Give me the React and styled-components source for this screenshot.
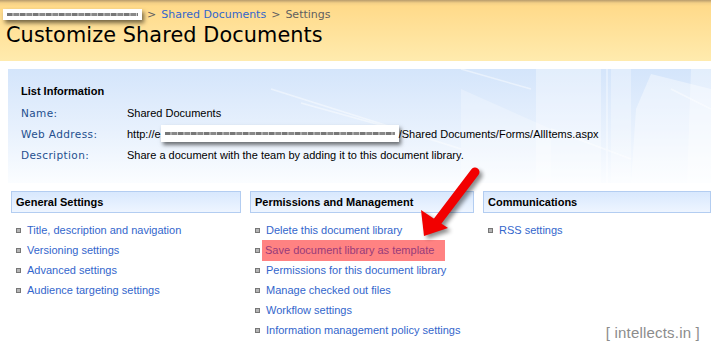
import styled, { createGlobalStyle } from "styled-components";

const GlobalStyle = createGlobalStyle`
  html, body {
    margin: 0;
    padding: 0;
    background: #fff;
  }
  body {
    font-family: "Liberation Sans", Tahoma, sans-serif;
    font-size: 11px;
  }
`;

const Page = styled.div`
  position: relative;
  width: 711px;
  height: 344px;
  overflow: hidden;
`;

const HeaderBand = styled.header`
  height: 61px;
  box-sizing: border-box;
  padding: 8px 0 0 3px;
  background: linear-gradient(
    #b79b6c 0px,
    #f3cf86 3px,
    #ffda8a 6px,
    #ffebae 100%
  );
`;

const Crumbs = styled.div`
  display: flex;
  align-items: center;
  gap: 5px;
  height: 12px;
  font-family: "DejaVu Sans", Verdana, sans-serif;
  font-size: 11px;
  color: #5f5f5f;
`;

const Redacted = styled.span`
  display: inline-flex;
  align-items: center;
  box-sizing: border-box;
  width: ${(p) => p.w}px;
  height: ${(p) => p.h}px;
  padding: 0 4px;
  background: #fff;
  box-shadow: 2px 3px 4px rgba(0, 0, 0, 0.55);

  &::before {
    content: "";
    flex: 1;
    height: 3px;
    filter: blur(0.6px);
    background: repeating-linear-gradient(
      90deg,
      #777 0 5px,
      #aaa 5px 7px,
      #888 7px 12px,
      #ccc 12px 13px
    );
  }
`;

const CrumbLink = styled.a`
  color: #3366cc;
  text-decoration: none;
`;

const Title = styled.h1`
  margin: 3px 0 0 3px;
  font-family: "DejaVu Sans", Verdana, sans-serif;
  font-weight: normal;
  font-size: 20.8px;
  letter-spacing: 0.1px;
  color: #000;
`;

const InfoPanel = styled.section`
  position: relative;
  margin: 8px 0 0 8px;
  height: 114px;
  box-sizing: border-box;
  padding: 16px 0 0 13px;
  background: linear-gradient(#d4e5fb 0%, #e8f1fd 55%, #fbfdff 100%);
  overflow: hidden;
`;

const Building = styled.svg`
  position: absolute;
  right: 0;
  top: 0;
  width: 580px;
  height: 114px;
  pointer-events: none;
`;

const InfoHeading = styled.h2`
  position: relative;
  margin: 0 0 1px;
  height: 16px;
  font-size: 11px;
  font-weight: bold;
  color: #000;
`;

const InfoGrid = styled.dl`
  position: relative;
  display: grid;
  grid-template-columns: 106px 1fr;
  grid-auto-rows: 21px;
  align-items: center;
  margin: 0;
`;

const InfoLabel = styled.dt`
  font-family: "DejaVu Sans", Verdana, sans-serif;
  font-size: 10.5px;
  letter-spacing: 0.4px;
  color: #244f8e;
`;

const InfoValue = styled.dd`
  display: flex;
  align-items: center;
  margin: 0;
  color: #000;
`;

const Columns = styled.div`
  display: grid;
  grid-template-columns: 230px 224px 228px;
  column-gap: 9px;
  margin: 8px 0 0 11px;
`;

const SectionHead = styled.h3`
  display: flex;
  align-items: center;
  height: 22px;
  box-sizing: border-box;
  margin: 0 0 7px;
  padding-left: 4px;
  border: 1px solid #b3cdf1;
  background: linear-gradient(#d8e8fd, #eef5ff);
  font-size: 11px;
  font-weight: bold;
  color: #000;
`;

const LinkList = styled.ul`
  margin: 0;
  padding: 0 0 0 5px;
  list-style: none;
`;

const LinkItem = styled.li`
  display: flex;
  align-items: center;
  height: 20px;
  gap: 6px;

  &::before {
    content: "";
    width: 5px;
    height: 5px;
    box-sizing: border-box;
    border: 1px solid #777;
    background: #b5b5b5;
  }
`;

const SettingsLink = styled.a`
  display: flex;
  align-items: center;
  height: 21px;
  color: ${(p) => (p.marked ? "#973b7a" : "#3366cc")};
  background: ${(p) => (p.marked ? "#ff8282" : "transparent")};
  margin-left: ${(p) => (p.marked ? "-4px" : "0")};
  padding: ${(p) => (p.marked ? "0 11px 0 3px" : "0")};
  text-decoration: none;
`;

const Arrow = styled.svg`
  position: absolute;
  left: 405px;
  top: 160px;
  width: 90px;
  height: 90px;
  pointer-events: none;
`;

const Watermark = styled.div`
  position: absolute;
  right: 11px;
  bottom: 3px;
  font-family: "Liberation Sans", Arial, sans-serif;
  font-size: 15px;
  letter-spacing: 0.2px;
  color: #8c8c8c;
`;

const sections = [
  {
    title: "General Settings",
    links: [
      "Title, description and navigation",
      "Versioning settings",
      "Advanced settings",
      "Audience targeting settings",
    ],
  },
  {
    title: "Permissions and Management",
    links: [
      "Delete this document library",
      "Save document library as template",
      "Permissions for this document library",
      "Manage checked out files",
      "Workflow settings",
      "Information management policy settings",
    ],
  },
  {
    title: "Communications",
    links: ["RSS settings"],
  },
];

export default function App() {
  return (
    <Page>
      <GlobalStyle />
      <HeaderBand>
        <Crumbs>
          <Redacted w={139} h={11} />
          <span>&gt;</span>
          <CrumbLink href="#">Shared Documents</CrumbLink>
          <span>&gt;</span>
          <span>Settings</span>
        </Crumbs>
        <Title>Customize Shared Documents</Title>
      </HeaderBand>

      <InfoPanel>
        <Building viewBox="0 0 580 114" preserveAspectRatio="none">
          <g fill="#fff">
            <polygon points="405,0 470,0 470,114 405,114" opacity="0.35" />
            <polygon points="480,0 500,0 500,114 480,114" opacity="0.3" />
            <polygon points="520,5 580,20 580,114 500,114 505,40" opacity="0.4" />
            <polygon points="330,20 420,60 420,114 330,114" opacity="0.25" />
            <polygon points="560,0 580,0 580,114 556,114" opacity="0.35" />
          </g>
          <g stroke="#fff" strokeWidth="1.5" opacity="0.45">
            <line x1="140" y1="20" x2="330" y2="80" />
            <line x1="170" y1="34" x2="300" y2="70" />
            <line x1="330" y1="0" x2="400" y2="20" />
            <line x1="420" y1="60" x2="500" y2="90" />
            <line x1="540" y1="20" x2="580" y2="40" />
            <line x1="476" y1="0" x2="476" y2="114" />
          </g>
        </Building>
        <InfoHeading>List Information</InfoHeading>
        <InfoGrid>
          <InfoLabel>Name:</InfoLabel>
          <InfoValue>Shared Documents</InfoValue>
          <InfoLabel>Web Address:</InfoLabel>
          <InfoValue>
            http://e
            <Redacted w={238} h={17} />
            /Shared Documents/Forms/AllItems.aspx
          </InfoValue>
          <InfoLabel>Description:</InfoLabel>
          <InfoValue>
            Share a document with the team by adding it to this document
            library.
          </InfoValue>
        </InfoGrid>
      </InfoPanel>

      <Columns>
        {sections.map((section) => (
          <div key={section.title}>
            <SectionHead>{section.title}</SectionHead>
            <LinkList>
              {section.links.map((link) => (
                <LinkItem key={link}>
                  <SettingsLink
                    href="#"
                    marked={link === "Save document library as template"}
                  >
                    {link}
                  </SettingsLink>
                </LinkItem>
              ))}
            </LinkList>
          </div>
        ))}
      </Columns>

      <Arrow viewBox="0 0 90 90">
        <defs>
          <filter id="shade" x="-30%" y="-30%" width="160%" height="160%">
            <feGaussianBlur stdDeviation="2" />
          </filter>
        </defs>
        <g transform="translate(3 3)" fill="#000" opacity="0.45" filter="url(#shade)">
          <line x1="70" y1="12" x2="32" y2="62" stroke="#000" strokeWidth="9" strokeLinecap="round" />
          <polygon points="19,76 16,50 43,68" />
        </g>
        <line x1="70" y1="12" x2="32" y2="62" stroke="#f20000" strokeWidth="9" strokeLinecap="round" />
        <polygon points="19,76 16,50 43,68" fill="#f20000" />
      </Arrow>

      <Watermark>[ intellects.in ]</Watermark>
    </Page>
  );
}
